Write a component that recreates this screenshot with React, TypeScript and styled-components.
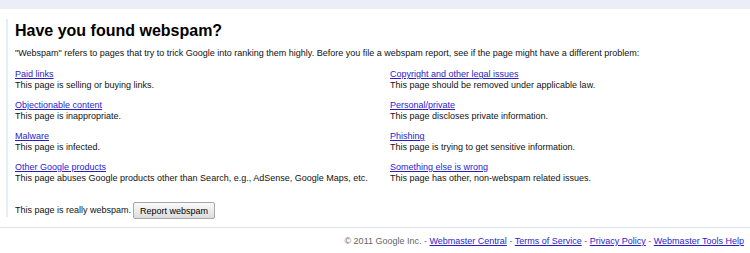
import React from "react";
import styled, { createGlobalStyle } from "styled-components";

const GlobalStyle = createGlobalStyle`
  html, body {
    margin: 0;
    padding: 0;
    background: #ffffff;
  }
  body {
    font-family: "Liberation Sans", Arial, sans-serif;
    font-size: 9px;
    color: #000000;
  }
`;

const TopBar = styled.div`
  height: 9px;
  background: #ebeef6;
`;

const Main = styled.main`
  margin: 10px 0 0 6px;
  border-left: 2px solid #e6ecf8;
  padding: 2px 0 0 7px;
  height: 198px;
  box-sizing: border-box;
`;

const Title = styled.h1`
  margin: 0 0 7px;
  font-size: 16px;
  line-height: 20px;
  font-weight: bold;
`;

const Intro = styled.p`
  margin: 0 0 10px;
  line-height: 11px;
  color: #111;
`;

const Grid = styled.div`
  display: grid;
  grid-template-columns: 375px 1fr;
  grid-auto-flow: column;
  grid-template-rows: repeat(4, auto);
  row-gap: 9px;
`;

const Item = styled.div`
  display: flex;
  flex-direction: column;
  line-height: 11px;
  color: #111;
`;

const Link = styled.a`
  color: #2a1bcc;
  text-decoration: underline;
`;

const ReportRow = styled.div`
  display: flex;
  align-items: center;
  margin-top: 18px;
  line-height: 11px;
  color: #111;
`;

const Button = styled.button`
  margin-left: 2px;
  height: 17px;
  padding: 0 6px;
  font-family: "Liberation Sans", Arial, sans-serif;
  font-size: 9px;
  color: #000;
  border: 1px solid #a8a8a8;
  border-radius: 2px;
  background: linear-gradient(#fafafa, #dcdcdc);
`;

const Footer = styled.footer`
  margin-top: 10px;
  border-top: 1px solid #dbe3f3;
  padding: 8px 6px 0 0;
  text-align: right;
  line-height: 11px;
  color: #666666;
`;

const left = [
  ["Paid links", "This page is selling or buying links."],
  ["Objectionable content", "This page is inappropriate."],
  ["Malware", "This page is infected."],
  [
    "Other Google products",
    "This page abuses Google products other than Search, e.g., AdSense, Google Maps, etc.",
  ],
];

const right = [
  ["Copyright and other legal issues", "This page should be removed under applicable law."],
  ["Personal/private", "This page discloses private information."],
  ["Phishing", "This page is trying to get sensitive information."],
  ["Something else is wrong", "This page has other, non-webspam related issues."],
];

export default function App() {
  return (
    <>
      <GlobalStyle />
      <TopBar />
      <Main>
        <Title>Have you found webspam?</Title>
        <Intro>
          "Webspam" refers to pages that try to trick Google into ranking them highly. Before you
          file a webspam report, see if the page might have a different problem:
        </Intro>
        <Grid>
          {[...left, ...right].map(([t, d]) => (
            <Item key={t}>
              <Link href="#">{t}</Link>
              <span>{d}</span>
            </Item>
          ))}
        </Grid>
        <ReportRow>
          This page is really webspam.
          <Button>Report webspam</Button>
        </ReportRow>
      </Main>
      <Footer>
        © 2011 Google Inc. - <Link href="#">Webmaster Central</Link> -{" "}
        <Link href="#">Terms of Service</Link> - <Link href="#">Privacy Policy</Link> -{" "}
        <Link href="#">Webmaster Tools Help</Link>
      </Footer>
    </>
  );
}
